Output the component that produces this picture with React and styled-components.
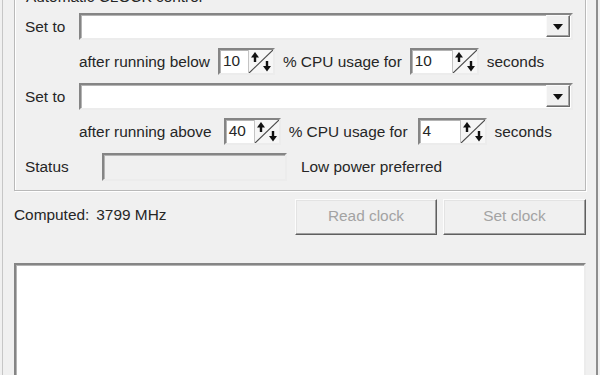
import React from "react";
import styled, { createGlobalStyle } from "styled-components";

const Global = createGlobalStyle`
  html, body {
    margin: 0;
    padding: 0;
    background: #f0f0f0;
    overflow: hidden;
  }
  body {
    font-family: "Liberation Sans", Arial, sans-serif;
    font-size: 15.4px;
    color: #262626;
  }
`;

const Window = styled.div`
  box-sizing: border-box;
  width: 596px;
  height: 375px;
  margin-left: 2px;
  border-left: 1px solid #c6c6c6;
  border-right: 2px solid #8e8e8e;
  padding: 0 10px 0 11px;
  display: flex;
  flex-direction: column;
  overflow: hidden;
`;

const Group = styled.div`
  position: relative;
  margin-top: -3px;
  border: 1px solid #b9b9b9;
  box-shadow: inset 1px 1px 0 #fff, 1px 1px 0 #fff;
  padding: 15px 12px 9px 10px;
  display: flex;
  flex-direction: column;
  gap: 8px;
`;

const Legend = styled.span`
  position: absolute;
  left: 9px;
  top: -10px;
  padding: 0 2px;
  background: #f0f0f0;
  line-height: 18px;
`;

const Row = styled.div`
  display: flex;
  align-items: center;
  height: ${(p) => p.$h || 27}px;
  padding-left: ${(p) => p.$indent || 0}px;
  gap: 8px;
`;

const Label = styled.span`
  width: ${(p) => p.$w}px;
  flex: none;
  white-space: nowrap;
`;

const Text = styled.span`
  white-space: nowrap;
  margin-left: ${(p) => p.$ml || 0}px;
`;

const sunken = `
  box-sizing: border-box;
  border: 2px solid;
  border-color: #858585 #ececec #ececec #858585;
  box-shadow: inset 1px 1px 0 #b4b4b4;
`;

const Combo = styled.div`
  ${sunken}
  flex: 1;
  height: 27px;
  background: #fff;
  display: flex;
  justify-content: flex-end;
  padding: 0 1px 1px 0;
`;

const DropButton = styled.div`
  box-sizing: border-box;
  width: 24px;
  height: 100%;
  background: #f0f0f0;
  border: 1px solid;
  border-color: #fafafa #6a6a6a #6a6a6a #fafafa;
  box-shadow: inset -1px -1px 0 #a0a0a0;
  display: flex;
  align-items: center;
  justify-content: center;
  &::after {
    content: "";
    border-left: 5px solid transparent;
    border-right: 5px solid transparent;
    border-top: 6px solid #111;
    margin-top: 1px;
  }
`;

const Spin = styled.div`
  ${sunken}
  width: ${(p) => p.$w}px;
  height: 27px;
  flex: none;
  background: #fff;
  display: flex;
  align-items: stretch;
  margin-left: ${(p) => p.$ml || 0}px;
`;

const SpinValue = styled.span`
  flex: 1;
  padding-left: 3px;
  line-height: 22px;
`;

const SpinGlyph = styled.svg`
  width: 24px;
  height: 23px;
  flex: none;
  background: #f6f6f6;
  border-left: 1px solid #c4c4c4;
`;

const StatusBox = styled.div`
  ${sunken}
  width: 185px;
  height: 28px;
  flex: none;
  background: #f0f0f0;
`;

const Bottom = styled.div`
  display: flex;
  align-items: center;
  padding-top: 8px;
  height: 36px;
`;

const Computed = styled.div`
  flex: 1;
  display: flex;
  gap: 7px;
  padding-bottom: 4px;
`;

const Button = styled.div`
  box-sizing: border-box;
  width: ${(p) => p.$w}px;
  height: 36px;
  margin-left: 6px;
  border: 1px solid;
  border-color: #fcfcfc #5f5f5f #5f5f5f #fcfcfc;
  box-shadow: inset -1px -1px 0 #a0a0a0, inset 1px 1px 0 #e3e3e3;
  background: #f0f0f0;
  color: #a3a3a3;
  display: flex;
  align-items: center;
  justify-content: center;
  padding-bottom: 2px;
`;

const ListBox = styled.div`
  ${sunken}
  margin-top: 28px;
  height: 140px;
  flex: none;
  background: #fff;
`;

function SpinArrows() {
  return (
    <SpinGlyph viewBox="0 0 24 23">
      <line x1="0" y1="23" x2="24" y2="0" stroke="#4a4a4a" strokeWidth="1.2" />
      <path d="M6 2 L2 7.5 L10 7.5 Z" fill="#111" />
      <rect x="4.8" y="6" width="2.4" height="6" fill="#111" />
      <path d="M18 21.5 L14 16 L22 16 Z" fill="#111" />
      <rect x="16.8" y="11" width="2.4" height="6" fill="#111" />
    </SpinGlyph>
  );
}

function SpinBox({ value, w, ml }) {
  return (
    <Spin $w={w} $ml={ml}>
      <SpinValue>{value}</SpinValue>
      <SpinArrows />
    </Spin>
  );
}

export default function App() {
  return (
    <>
      <Global />
      <Window>
        <Group>
          <Legend>Automatic CLOCK control</Legend>
          <Row>
            <Label $w={46}>Set to</Label>
            <Combo>
              <DropButton />
            </Combo>
          </Row>
          <Row $indent={54}>
            <Text>after running below</Text>
            <SpinBox value="10" w={57} />
            <Text>% CPU usage for</Text>
            <SpinBox value="10" w={69} />
            <Text>seconds</Text>
          </Row>
          <Row>
            <Label $w={46}>Set to</Label>
            <Combo>
              <DropButton />
            </Combo>
          </Row>
          <Row $indent={54}>
            <Text>after running above</Text>
            <SpinBox value="40" w={57} ml={4} />
            <Text>% CPU usage for</Text>
            <SpinBox value="4" w={69} ml={2} />
            <Text>seconds</Text>
          </Row>
          <Row $h={28}>
            <Label $w={69}>Status</Label>
            <StatusBox />
            <Text $ml={6}>Low power preferred</Text>
          </Row>
        </Group>
        <Bottom>
          <Computed>
            <span>Computed:</span>
            <span>3799 MHz</span>
          </Computed>
          <Button $w={142}>Read clock</Button>
          <Button $w={143}>Set clock</Button>
        </Bottom>
        <ListBox />
      </Window>
    </>
  );
}
